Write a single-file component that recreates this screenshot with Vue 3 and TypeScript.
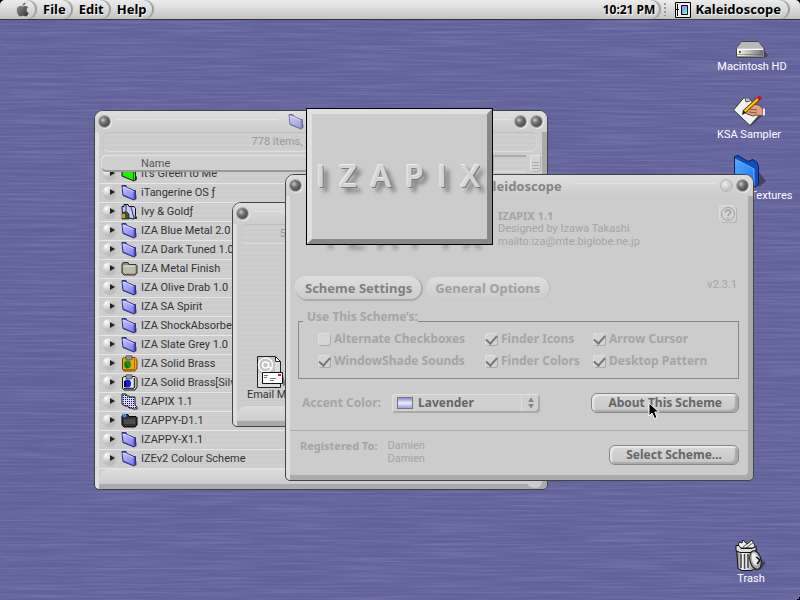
<script setup lang="ts">
import { ref } from 'vue'

interface Scheme {
  name: string
  icon: string
}

interface Option {
  label: string
  checked: boolean
}

const menus: string[] = ['File', 'Edit', 'Help']

const schemes: Scheme[] = [
  { name: "It's Green to Me", icon: 'green' },
  { name: 'iTangerine OS ƒ', icon: 'folder' },
  { name: 'Ivy & Goldƒ', icon: 'ivy' },
  { name: 'IZA Blue Metal 2.0', icon: 'folder' },
  { name: 'IZA Dark Tuned 1.0', icon: 'folder' },
  { name: 'IZA Metal Finish', icon: 'metal' },
  { name: 'IZA Olive Drab 1.0', icon: 'folder' },
  { name: 'IZA SA Spirit', icon: 'folder' },
  { name: 'IZA ShockAbsorber', icon: 'folder' },
  { name: 'IZA Slate Grey 1.0', icon: 'folder' },
  { name: 'IZA Solid Brass', icon: 'brass' },
  { name: 'IZA Solid Brass[Silver]', icon: 'silver' },
  { name: 'IZAPIX 1.1', icon: 'dots' },
  { name: 'IZAPPY-D1.1', icon: 'dark' },
  { name: 'IZAPPY-X1.1', icon: 'folder' },
  { name: 'IZEv2 Colour Scheme', icon: 'folder' },
]

const options = ref<Option[]>([
  { label: 'Alternate Checkboxes', checked: false },
  { label: 'Finder Icons', checked: true },
  { label: 'Arrow Cursor', checked: true },
  { label: 'WindowShade Sounds', checked: true },
  { label: 'Finder Colors', checked: true },
  { label: 'Desktop Pattern', checked: true },
])

const accent = ref<string>('Lavender')
const logo: string[] = 'IZAPIX'.split('')
</script>

<template>
  <div class="desktop">
    <svg class="defs" aria-hidden="true">
      <linearGradient id="g-folder" x1="0" y1="0" x2="1" y2="1">
        <stop offset="0" stop-color="#c4c4ff" /><stop offset="1" stop-color="#7c7cec" />
      </linearGradient>
      <linearGradient id="g-blue" x1="0" y1="0" x2="1" y2="1">
        <stop offset="0" stop-color="#55aaff" /><stop offset="1" stop-color="#1c78ee" />
      </linearGradient>
      <linearGradient id="g-disk" x1="0" y1="0" x2="1" y2="0">
        <stop offset="0" stop-color="#ffffff" /><stop offset="1" stop-color="#707070" />
      </linearGradient>
      <linearGradient id="g-can" x1="0" y1="0" x2="1" y2="0">
        <stop offset="0" stop-color="#777" /><stop offset=".35" stop-color="#fff" />
        <stop offset=".7" stop-color="#bbb" /><stop offset="1" stop-color="#666" />
      </linearGradient>
      <linearGradient id="g-apple" x1="0" y1="0" x2="1" y2="1">
        <stop offset="0" stop-color="#999" /><stop offset="1" stop-color="#333" />
      </linearGradient>
      <linearGradient id="g-rainbow" x1="0" y1="0" x2="1" y2="1">
        <stop offset="0" stop-color="#e07cff" /><stop offset=".45" stop-color="#7aa8ff" />
        <stop offset=".75" stop-color="#6fffc0" /><stop offset="1" stop-color="#f4ff70" />
      </linearGradient>
      <pattern id="p-dots" width="2" height="2" patternUnits="userSpaceOnUse">
        <rect width="2" height="2" fill="#dcdcff" /><rect width="1" height="1" fill="#111133" />
      </pattern>
      <filter id="brushed" x="0" y="0" width="100%" height="100%">
        <feTurbulence type="fractalNoise" baseFrequency="0.012 0.5" numOctaves="3" seed="8" />
        <feColorMatrix values="0 0 0 0 .52  0 0 0 0 .52  0 0 0 0 .74  .8 0 0 0 -.28" />
      </filter>
      <symbol id="i-folder" viewBox="0 0 17 17">
        <path d="M13 7l3 5v3l-3 1z" fill="#555" opacity=".55" />
        <path d="M1 1.500h4l1 2 7 3h1.500V15L13 16 2 11.500z" fill="#5555c0" stroke="#2c2c80" />
        <path d="M1.500 3l3 0 8 4V15L2.500 10.500z" fill="url(#g-folder)" />
        <path d="M2 3l3 1 7.500 3.500" fill="none" stroke="#e0e0ff" stroke-width=".8" />
      </symbol>
      <symbol id="i-green" viewBox="0 0 17 17">
        <path d="M13 7l3 5v3l-3 1z" fill="#444" />
        <path d="M1 1.500h4l1 2 7 3h1.500V15L13 16 1 11z" fill="#22ee00" stroke="#111" />
        <path d="M12.500 7v8" stroke="#0a7a00" />
      </symbol>
      <symbol id="i-ivy" viewBox="0 0 17 17">
        <path d="M1 3.500h2v-2h4l1 2h5l1.500 2V15L12 16 1.500 13z" fill="#c8c8ff" stroke="#111" />
        <path d="M10 4l3 11M5 2v7" stroke="#111" stroke-width=".8" />
        <path d="M1 16V11l2-2h3l2 2v5z" fill="#3a5a30" stroke="#222" stroke-width=".7" />
        <path d="M1 11h3v4H1z" fill="#c89a20" />
        <path d="M14 12l2 2v2h-3z" fill="#333" />
      </symbol>
      <symbol id="i-metal" viewBox="0 0 17 17">
        <path d="M1 4.500l1-2h5l1 2h7l1 1V13l-2 2H3l-2-2z" fill="#8a887a" stroke="#333" />
        <path d="M2 5.500h12.500V12L13.500 13.500H3.500L2 12z" fill="#bdbbac" />
        <path d="M2.500 6h11.500" stroke="#eee" />
      </symbol>
      <symbol id="i-brass" viewBox="0 0 17 17">
        <path d="M1.500 3.500l2-1h10.500l2 2V13l-2 3H3l-1.500-2z" fill="#eca80c" stroke="#6a4400" />
        <path d="M5 .8h6v4H5z" fill="#999" stroke="#444" stroke-width=".7" />
        <path d="M13.500 4v10M3 14.500h10" stroke="#a86500" />
        <ellipse cx="6.500" cy="9.500" rx="3.500" ry="4" fill="#1f8e20" /><path d="M4 8l3 5" stroke="#0a5010" />
      </symbol>
      <symbol id="i-silver" viewBox="0 0 17 17">
        <path d="M1.500 3.500l2-1h10.500l2 2V13l-2 3H3l-1.500-2z" fill="#e4e4ec" stroke="#111" />
        <path d="M5 .8h6v4H5z" fill="#999" stroke="#444" stroke-width=".7" />
        <path d="M13.500 4v10M3 14.500h10" stroke="#333" stroke-width="1.500" />
        <ellipse cx="6.500" cy="9.500" rx="3.500" ry="4" fill="#1020dd" /><path d="M4 7v6" stroke="#000040" stroke-width="2" />
      </symbol>
      <symbol id="i-dots" viewBox="0 0 17 17">
        <path d="M1 1h4l1 2h2l1 1h5v8l2 2v2h-4l-1-1H8l-1-2H4l-3-2z" fill="url(#p-dots)" stroke="#111133" />
      </symbol>
      <symbol id="i-dark" viewBox="0 0 17 17">
        <path d="M1 4.500l1-2h5l1 2h7l1 1V13l-2 2H3l-2-2z" fill="#333" stroke="#000" />
        <path d="M3 7h11v5H3z" fill="#4c4c4c" /><circle cx="3.500" cy="3.500" r="2" fill="#3c8cf0" />
      </symbol>
    </svg>

    <svg class="texture" aria-hidden="true"><rect width="100%" height="100%" filter="url(#brushed)" /></svg>

    <header class="menubar">
      <nav class="menus">
        <button class="menu apple" aria-label="Apple menu">
          <svg width="13" height="15" viewBox="0 0 13 15">
            <path d="M6.600 4C6.500 2 7.800.6 9.600.3 9.700 2.200 8.500 3.800 6.600 4zM.7 8.300C.7 5.700 2.500 4 4.300 4c1 0 1.600.6 2.400.6S8.400 4 9.500 4c1 0 2.100.6 2.700 1.500-2.400 1.400-1.900 4.500.4 5.400-.6 1.700-1.900 3.500-3 3.500-.9 0-1.300-.6-2.500-.6s-1.700.6-2.600.6C2.800 14.400.7 11.200.7 8.300z" fill="url(#g-apple)" />
          </svg>
        </button>
        <button v-for="m in menus" :key="m" class="menu">{{ m }}</button>
      </nav>
      <div class="status">
        <button class="menu clock">10:21 PM</button>
        <span class="grip"></span>
        <button class="menu app">
          <svg width="16" height="16" viewBox="0 0 16 16">
            <path d="M.5.500h15v15H.5z" fill="#eee" stroke="#000" />
            <path d="M2.500 2v12M1 7.500h3" stroke="#000" />
            <path d="M6.500 3.500h6v9h-6z" fill="url(#g-rainbow)" stroke="#000" />
          </svg>
          Kaleidoscope
        </button>
      </div>
    </header>

    <figure class="item hd">
      <svg width="34" height="20" viewBox="0 0 34 20">
        <path d="M28 8l5 8-4 2z" fill="#222" opacity=".5" />
        <path d="M6.500 1.500h17L29 8.500v8l-1 1H1.500v-9z" fill="#ccc" stroke="#444" />
        <path d="M7 2h16l5 6H2z" fill="#b8b8b8" /><path d="M2 9h26v7H2z" fill="url(#g-disk)" />
        <path d="M2 9.500h26" stroke="#fff" /><path d="M2 14.500h26M2 16.500h26" stroke="#666" opacity=".6" />
        <path d="M4 11h2v2H4z" fill="#d00" /><path d="M5 11h1v2H5z" fill="#0a0" />
      </svg>
      <figcaption>Macintosh HD</figcaption>
    </figure>
    <figure class="item sampler">
      <svg width="34" height="34" viewBox="0 0 34 34">
        <path d="M29 19l3 1-13 12-2 0z" fill="#222" opacity=".5" />
        <path d="M1.500 16L12 3.500l2 2 2-2 14 14.500-12 13.500z" fill="#f2f2f2" stroke="#333" />
        <path d="M13 3l1 5 4-1" fill="#bbb" stroke="#555" />
        <path d="M12 16l7-6 8 1 4 4v7l-6-1-4 1-6-2z" fill="#dfa181" stroke="#75452f" />
        <path d="M17 15l8 1M17 18l8 1" stroke="#8e5337" />
        <path d="M31 14v8l2-1v-6z" fill="#e8e8f4" />
        <path d="M12 18L26 5" stroke="#7a4a00" stroke-width="4" /><path d="M12.500 17.500L26 5" stroke="#ffcc22" stroke-width="2" />
        <path d="M26 5l3-2" stroke="#d01020" stroke-width="4" /><path d="M10 21l1-5 3 3z" fill="#222" />
      </svg>
      <figcaption>KSA Sampler</figcaption>
    </figure>
    <figure class="item textures">
      <svg width="34" height="34" viewBox="0 0 34 34">
        <path d="M26 17l7 9-7 6z" fill="#222" opacity=".5" />
        <path d="M1.500 1.500L5 .5l10 6 5-2 4 3 1.500 4V30l-3 2L1.500 22z" fill="#0e50c0" stroke="#0a2060" />
        <path d="M2 4l19 10v17L2 21z" fill="url(#g-blue)" /><path d="M2 4l19 10v17" fill="none" stroke="#6ab8ff" />
      </svg>
      <figcaption>Desktop Textures</figcaption>
    </figure>
    <figure class="item trash">
      <svg width="32" height="33" viewBox="0 0 32 33">
        <path d="M22 18l9 6-5 6-6 2z" fill="#222" opacity=".55" />
        <path d="M3 8l1-5 3 1 1-3 4 4 5-4 3 6-2 4H4z" fill="#eee" stroke="#222" />
        <path d="M8 8l8-6M11 9l8-6" stroke="#555" />
        <path d="M1.500 9L3 29.500l4 2h10l3-2L21 9z" fill="url(#g-can)" stroke="#111" />
        <path d="M1 6.500h3l2 3h11l4-2v4l-4 2H5l-4-2z" fill="#ddd" stroke="#111" />
        <path d="M6 15v14M9.500 15v15M13 15v14" stroke="#444" stroke-width="1.500" />
        <ellipse cx="20.500" cy="21" rx="5.500" ry="9.500" fill="#aaa" stroke="#111" transform="rotate(-14 20.500 21)" />
        <ellipse cx="20" cy="20" rx="3" ry="6.500" fill="#eee" transform="rotate(-14 20 20)" />
        <path d="M21 18l4 3-3 4" fill="none" stroke="#111" stroke-width="1.500" />
      </svg>
      <figcaption>Trash</figcaption>
    </figure>

    <section class="window schemes">
      <header class="titlebar">
        <div class="side"><button class="ball" aria-label="Close"></button><i class="ridge"></i></div>
        <h2 class="title pale"><svg width="17" height="17"><use href="#i-folder" /></svg>Mods</h2>
        <div class="side"><i class="ridge"></i><button class="ball" aria-label="Zoom"></button><button class="ball" aria-label="Collapse"></button></div>
      </header>
      <p class="info">778 items, 4.2 GB available</p>
      <div class="columns">
        <button class="col-name">Name</button>
        <span class="col-rest"></span>
        <button class="order" aria-label="Sort order"></button>
      </div>
      <ul class="list">
        <li v-for="s in schemes" :key="s.name" class="row">
          <button class="twist" :aria-label="'Expand ' + s.name"></button>
          <svg width="17" height="17"><use :href="'#i-' + s.icon" /></svg>
          <span>{{ s.name }}</span>
        </li>
      </ul>
      <div class="footer"><i class="thumb"></i></div>
    </section>

    <section class="window mail">
      <header class="titlebar">
        <div class="side"><button class="ball" aria-label="Close"></button><i class="ridge"></i></div>
        <h2 class="title pale"></h2>
        <div class="side"><i class="ridge"></i><button class="ball" aria-label="Collapse"></button></div>
      </header>
      <p class="info">5 items, 4.2 GB available</p>
      <div class="canvas">
        <figure class="file">
          <svg width="31" height="33" viewBox="0 0 31 33">
            <path d="M1.500.500h18l5 5v26h-23z" fill="#ddd" stroke="#222" />
            <path d="M19.500.500v5h5z" fill="#fff" stroke="#222" />
            <path d="M2 1h17v16H2z" fill="#c4c4c4" />
            <circle cx="9.500" cy="9" r="7" fill="none" stroke="#fff" stroke-width="1.500" />
            <circle cx="9.500" cy="9" r="3" fill="none" stroke="#fff" stroke-width="1.500" /><path d="M12.500 6v5l3 1" fill="none" stroke="#fff" stroke-width="1.500" />
            <path d="M27 19l3 10-3 1z" fill="#444" opacity=".6" />
            <path d="M6.500 16.500h20v11h-20z" fill="#fff" stroke="#111" />
            <path d="M8 19.500h4M8 21.500h3M14 22.500h6M14 24.500h4" stroke="#777" /><path d="M22 18h3v2h-3z" fill="#e02020" />
          </svg>
          <figcaption>Email Me!</figcaption>
        </figure>
      </div>
      <div class="footer"></div>
    </section>

    <section class="window kaleidoscope">
      <header class="titlebar">
        <div class="side"><button class="ball" aria-label="Close"></button><i class="ridge"></i></div>
        <h1 class="title">Kaleidoscope</h1>
        <div class="side"><i class="ridge"></i><button class="ball dim" aria-label="Zoom"></button><button class="ball" aria-label="Collapse"></button></div>
      </header>
      <div class="about">
        <div class="logo under"><span v-for="(c, i) in logo" :key="i">{{ c }}</span></div>
        <div class="credits">
          <strong>IZAPIX 1.1</strong>
          <span>Designed by Izawa Takashi</span>
          <span>mailto:iza@mte.biglobe.ne.jp</span>
        </div>
        <button class="help" aria-label="Help">
          <svg width="16" height="16" viewBox="0 0 16 16" fill="none" stroke="#a0a0a0">
            <circle cx="8" cy="8" r="6.500" /><path d="M5.500 6.500C5.500 3.300 10.500 3.300 10.500 6.300 10.500 8 8 8 8 10M8 11.500v1.500" stroke-width="1.500" />
          </svg>
        </button>
      </div>
      <div class="tabs">
        <button class="tab active">Scheme Settings</button>
        <button class="tab">General Options</button>
        <span class="version">v2.3.1</span>
      </div>
      <div class="pane">
        <fieldset>
          <legend>Use This Scheme’s:</legend>
          <div class="checks">
            <label v-for="o in options" :key="o.label"><input v-model="o.checked" type="checkbox">{{ o.label }}</label>
          </div>
        </fieldset>
        <div class="accent">
          <label for="accent">Accent Color:</label>
          <div class="popup">
            <i class="swatch"></i>
            <select id="accent" v-model="accent">
              <option>Lavender</option>
            </select>
            <svg width="19" height="16" viewBox="0 0 19 16"><path d="M9.500 2l3 5h-6zM9.500 14l3-5h-6z" fill="#858585" /></svg>
          </div>
          <button class="push">About This Scheme</button>
        </div>
      </div>
      <footer class="registration">
        <strong>Registered To:</strong>
        <span class="owner">Damien<br>Damien</span>
        <button class="push select">Select Scheme...</button>
      </footer>
    </section>

    <div class="splash">
      <div class="logo"><span v-for="(c, i) in logo" :key="i">{{ c }}</span></div>
    </div>

    <svg class="cursor" width="13" height="18" viewBox="0 0 13 18" aria-hidden="true">
      <path d="M1 1v13l3-3 2.500 5.500 2.500-1L6.800 10H11z" fill="#000" stroke="#fff" />
    </svg>
    <i class="corner"></i>
  </div>
</template>

<style>
body {
  margin: 0;
  background: #63639d;
}
</style>

<style scoped>
* {
  box-sizing: border-box;
}
.desktop {
  position: relative;
  min-height: 100vh;
  overflow: hidden;
  background: #61619b;
  font: 11px/13px Roboto, "Liberation Sans", sans-serif;
  color: #333;
}
button,
select {
  margin: 0;
  padding: 0;
  border: 0;
  background: none;
  font: inherit;
  color: inherit;
}
h1,
h2,
p,
ul,
figure {
  margin: 0;
  padding: 0;
}
.defs {
  position: absolute;
  width: 0;
  height: 0;
}
.texture {
  position: absolute;
  inset: 0;
  width: 100%;
  height: 100%;
  opacity: .5;
}
.corner {
  position: absolute;
  right: 0;
  bottom: 0;
  width: 5px;
  height: 5px;
  background: radial-gradient(circle at 0 0, transparent 5px, #000 5px);
}

/* Menu bar */
.menubar {
  position: relative;
  display: flex;
  justify-content: space-between;
  height: 20px;
  border-bottom: 1px solid #333;
  border-radius: 5px 5px 0 0;
  background: linear-gradient(#ececec, #dadada 50%, #c2c2c2);
  box-shadow: 0 -5px 0 5px #000;
  font: bold 13px/19px "Noto Sans", "Open Sans", sans-serif;
  color: #000;
}
.menus,
.status {
  display: flex;
}
.menu {
  display: flex;
  align-items: center;
  padding: 0 5px 0 8px;
  border-radius: 0 9px 9px 0;
  box-shadow: 2px 0 1px #9c9c9c;
  text-shadow: 1px 1px #f4f4f4;
}
.menu.apple {
  padding: 0 6px 0 16px;
}
.menu.clock {
  padding-right: 4px;
  font-size: 12px;
}
.menu.app {
  gap: 4px;
  padding: 0 7px 0 6px;
  margin-right: 12px;
}
.grip {
  width: 4px;
  margin: 3px 1px 3px 5px;
  background: radial-gradient(circle at 1px 1px, #999 1px, transparent 1px) 0 0 / 4px 4px;
}

/* Desktop items */
.item {
  position: absolute;
  display: flex;
  flex-direction: column;
  align-items: center;
  width: 90px;
  color: #fff;
}
.item figcaption {
  white-space: nowrap;
}
.hd {
  right: 3px;
  top: 40px;
}
.sampler {
  right: 6px;
  top: 94px;
}
.textures {
  right: 5px;
  top: 155px;
}
.trash {
  right: 4px;
  top: 539px;
}

/* Windows */
.window {
  position: absolute;
  display: flex;
  flex-direction: column;
  padding: 0 5px 5px 4px;
  border: 1px solid #444;
  border-radius: 9px 9px 5px 5px;
  background: #ccc;
  box-shadow: inset 4px 2px #dedede, inset -5px -5px #aaa;
}
.schemes {
  left: 94px;
  top: 110px;
  width: 454px;
  background: repeating-linear-gradient(#cdcdcd 0 2px, #cbcbcb 2px 3px, #cfcfcf 3px 5px);
}
.mail {
  left: 232px;
  top: 202px;
  width: 220px;
  background: repeating-linear-gradient(#cdcdcd 0 2px, #c9c9c9 2px 3px, #cecece 3px 5px);
}
.kaleidoscope {
  left: 285px;
  top: 174px;
  width: 469px;
}
.titlebar {
  display: grid;
  grid-template-columns: 1fr auto 1fr;
  height: 21px;
  margin: 0 -5px 0 -4px;
  padding: 0 5px 0 4px;
  border-radius: 8px 8px 0 0;
  background: linear-gradient(#dedede, #d0d0d0 16px, #ccc);
}
.side {
  display: flex;
  gap: 5px;
  padding-top: 5px;
}
.ridge {
  flex: 1;
  height: 4px;
  border-bottom: 1px solid #e2e2e2;
}
.ball {
  width: 11px;
  height: 11px;
  border-radius: 50%;
  background: radial-gradient(circle at 4px 4px, #ccc 0, #777 3px, #555 6px);
  box-shadow: 0 0 0 1px #aaa, 1px 1px 1px 1px #eee;
}
.ball.dim {
  background: radial-gradient(circle at 4px 4px, #eee, #c4c4c4 6px);
  box-shadow: 0 0 0 1px #b4b4b4;
}
.title {
  display: flex;
  align-items: center;
  gap: 4px;
  padding: 0 13px;
  border-radius: 0 12px 0 0;
  background: linear-gradient(#e0e0e0, #ccc);
  font: bold 13px/20px "Noto Sans", "Open Sans", sans-serif;
  color: #858585;
}
.title.pale {
  padding: 0 10px;
  color: #a5a5a5;
}
.schemes .title {
  gap: 12px;
}
.title svg {
  opacity: .6;
}
.info {
  margin: 0 5px 3px 3px;
  border: 1px solid #c4c4c4;
  border-color: #bfbfbf #d8d8d8 #dedede #c4c4c4;
  border-radius: 7px;
  line-height: 18px;
  text-align: center;
  color: #999;
}
.schemes .info {
  padding-right: 4px;
}
.columns {
  display: flex;
  gap: 4px;
  height: 17px;
  margin: 0 1px 0 2px;
}
.col-name {
  flex: 1;
  padding-left: 40px;
  border-radius: 5px 0 0 5px;
  background: #cfcfcf;
  box-shadow: inset 1px 1px #e2e2e2, inset 0 -2px #999;
  text-align: left;
  color: #555;
}
.col-rest {
  width: 34px;
  border: 1px solid #aaa;
  border-width: 2px 0 0 2px;
  border-bottom: 1px solid #e0e0e0;
}
.order {
  width: 11px;
  border-radius: 3px;
  background: repeating-linear-gradient(transparent 0 2px, #aaa 2px 3px) 2px 5px / 7px 9px no-repeat, #d4d4d4;
  box-shadow: inset 1px 1px #e4e4e4, inset -1px -1px #b4b4b4;
}
.list {
  display: flex;
  flex-direction: column;
  justify-content: flex-end;
  height: 297px;
  overflow: hidden;
  list-style: none;
}
.row {
  display: flex;
  flex: none;
  align-items: center;
  height: 19px;
  padding: 0 0 2px 4px;
  border-bottom: 1px solid #e6e6e6;
}
.row svg {
  margin: 0 3px 0 6px;
}
.twist {
  display: flex;
  align-items: center;
  justify-content: flex-end;
  width: 12px;
  height: 12px;
  border-radius: 50%;
  background: radial-gradient(circle at 3px 3px, #fff, #bbb 8px);
  box-shadow: 1px 2px 2px #bbb;
}
.twist::after {
  content: "";
  border-left: 5px solid #222;
  border-top: 3px solid transparent;
  border-bottom: 3px solid transparent;
}
.footer {
  display: flex;
  justify-content: flex-end;
  height: 15px;
  border-radius: 10px 0 0 0;
  background: linear-gradient(#dedede, #ccc);
}
.thumb {
  width: 18px;
  margin-bottom: -4px;
  border-radius: 0 0 6px 12px;
  background: #ccc;
}
.canvas {
  padding: 109px 0 5px 9px;
}
.mail .info {
  margin-right: 8px;
  margin-left: 4px;
}
.file {
  display: flex;
  flex-direction: column;
  align-items: center;
  width: 50px;
  white-space: nowrap;
}
.file figcaption {
  margin-top: -1px;
}

/* Kaleidoscope panel */
.about {
  display: flex;
  align-items: flex-start;
  height: 81px;
  padding: 13px 12px 0 31px;
  color: #a5a5a5;
}
.credits {
  display: flex;
  flex: 1;
  flex-direction: column;
  padding-left: 21px;
}
.about strong,
.registration strong {
  font: bold 11px/13px "Noto Sans", "Open Sans", sans-serif;
}
.help {
  display: flex;
  margin-top: -3px;
  border-radius: 3px;
  background: #d2d2d2;
  box-shadow: -1px -1px #ddd, 1px 1px #b4b4b4;
}
.tabs {
  display: flex;
  gap: 5px;
  align-items: center;
  margin-right: 11px;
  padding-left: 6px;
}
.tab {
  padding: 0 9px;
  border-radius: 12px;
  background: linear-gradient(#dedede, #ccc);
  box-shadow: 1px 0 1px #b8b8b8;
  font: bold 13px/22px "Noto Sans", "Open Sans", sans-serif;
  color: #a0a0a0;
}
.tab.active {
  box-shadow: 1px 1px 1px 1px #aaa, -1px -1px #e0e0e0;
  color: #808080;
}
.version {
  margin: -8px 0 0 auto;
  color: #a5a5a5;
}
.pane {
  padding: 10px 9px 17px 8px;
  border-bottom: 1px solid #aaa;
  font: bold 12px/16px "Noto Sans", "Open Sans", sans-serif;
  color: #a5a5a5;
}
fieldset {
  min-width: 0;
  margin: 0;
  padding: 0 0 6px 19px;
  border: 1px solid #888;
}
legend {
  margin-left: -15px;
  padding: 0 0 8px 4px;
}
.checks {
  display: grid;
  grid-template-columns: 167px 108px 1fr;
  margin-top: -5px;
}
.checks label {
  display: flex;
  align-items: center;
  gap: 4px;
  height: 22px;
}
input {
  display: grid;
  justify-items: center;
  width: 12px;
  height: 12px;
  margin: 0;
  border-radius: 2px;
  appearance: none;
  background: #d4d4d4;
  box-shadow: inset 1px 1px #dedede, 1px 1px #aaa;
}
input:checked::after {
  content: "";
  width: 5px;
  height: 9px;
  border: solid #777;
  border-width: 0 2px 2px 0;
  transform: rotate(42deg);
}
.accent {
  display: flex;
  align-items: center;
  padding: 14px 0 0 4px;
}
.popup {
  display: flex;
  align-items: center;
  width: 148px;
  height: 19px;
  margin: 0 auto 0 11px;
  border-radius: 4px;
  background: #d0d0d0;
  box-shadow: inset 1px 1px #e0e0e0, inset -2px -2px #aaa;
  color: #666;
}
.popup svg {
  flex: none;
  border-left: 1px solid #ddd;
}
.swatch {
  width: 16px;
  height: 12px;
  margin: 0 5px;
  border: 1px solid #777;
  background: linear-gradient(#8888d8, #f0f0ff 50%, #9c9ce8);
}
select {
  flex: 1;
  min-width: 0;
  appearance: none;
}
.push {
  height: 20px;
  padding: 0 16px;
  border: 1px solid #888;
  border-radius: 6px;
  background: linear-gradient(#d6d6d6, #c8c8c8);
  box-shadow: inset 2px 2px 1px #e8e8e8, inset -3px -2px 1px #aaa;
  font: bold 12px/18px "Noto Sans", "Open Sans", sans-serif;
  color: #666;
}
.registration {
  display: flex;
  align-items: flex-start;
  padding: 8px 9px 10px 10px;
  color: #a5a5a5;
}
.owner {
  margin: 0 auto 0 10px;
}
.select {
  margin-top: 6px;
}

/* Splash */
.splash {
  position: absolute;
  left: 306px;
  top: 108px;
  width: 187px;
  padding: 46px 7px 48px 4px;
  border: 6px solid;
  border-color: #e0e0e0 #888 #888 #e0e0e0;
  outline: 1px solid #000;
  outline-offset: -1px;
  background: #ccc;
}
.logo {
  display: flex;
  justify-content: space-between;
  font: 600 31px/31px "Open Sans", "Noto Sans", sans-serif;
  color: #d4d4d4;
  text-shadow: -1px -1px #ececec, 1px 1px #777, 5px 5px 4px #777;
}
.logo.under {
  width: 156px;
  padding-top: 8px;
  text-shadow: 5px 5px 4px #888;
}
.cursor {
  position: absolute;
  left: 648px;
  top: 402px;
}
</style>
